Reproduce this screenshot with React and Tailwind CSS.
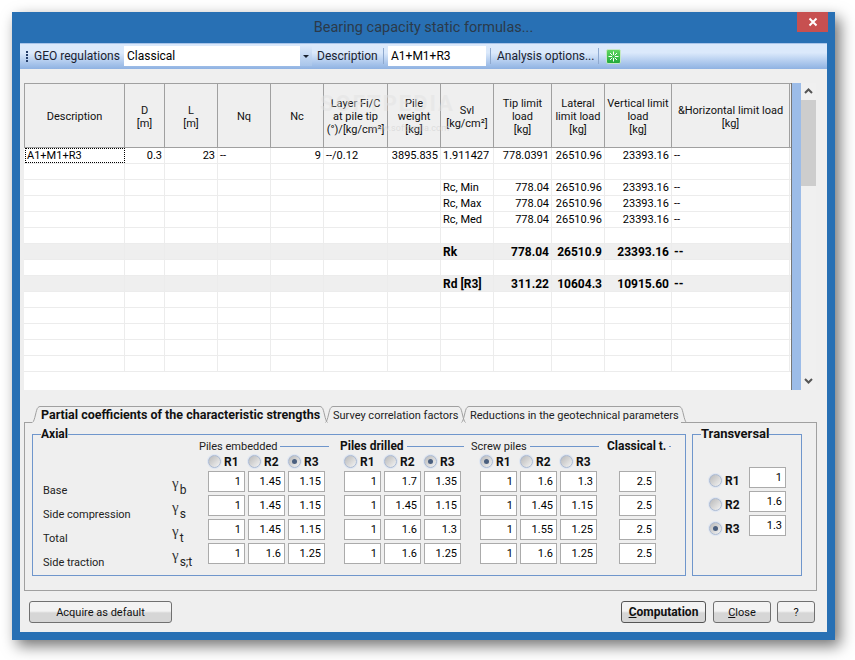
const FONT = "font-['Roboto','Liberation_Sans',sans-serif]";

const columns = [
  { w: 100, label: ["Description"] },
  { w: 40, label: ["D", "[m]"] },
  { w: 53, label: ["L", "[m]"] },
  { w: 53, label: ["Nq"] },
  { w: 53, label: ["Nc"] },
  { w: 64, label: ["Layer Fi/C", "at pile tip", "(°)/[kg/cm²]"] },
  { w: 53, label: ["Pile", "weight", "[kg]"] },
  { w: 53, label: ["Svl", "[kg/cm²]"] },
  { w: 58, label: ["Tip limit", "load", "[kg]"] },
  { w: 53, label: ["Lateral", "limit load", "[kg]"] },
  { w: 67, label: ["Vertical limit", "load", "[kg]"] },
  { w: 118, label: ["&Horizontal limit load", "[kg]"] },
];

// text alignment per column in the body rows
const aligns = ["l", "r", "r", "l", "r", "l", "r", "l", "r", "r", "r", "l"];

const E = "";
const rows = [
  { cells: ["A1+M1+R3", "0.3", "23", "--", "9", "--/0.12", "3895.835", "1.911427", "778.0391", "26510.96", "23393.16", "--"], first: true },
  { cells: [] },
  { cells: [E, E, E, E, E, E, E, "Rc, Min", "778.04", "26510.96", "23393.16", "--"] },
  { cells: [E, E, E, E, E, E, E, "Rc, Max", "778.04", "26510.96", "23393.16", "--"] },
  { cells: [E, E, E, E, E, E, E, "Rc, Med", "778.04", "26510.96", "23393.16", "--"] },
  { cells: [] },
  { cells: [E, E, E, E, E, E, E, "Rk", "778.04", "26510.9", "23393.16", "--"], bold: true },
  { cells: [] },
  { cells: [E, E, E, E, E, E, E, "Rd [R3]", "311.22", "10604.3", "10915.60", "--"], bold: true },
  { cells: [] },
  { cells: [] },
  { cells: [] },
  { cells: [] },
  { cells: [] },
];

const groups = [
  {
    w: 136,
    title: "Piles embedded",
    titleClass: "-ml-[9px] w-[130px]",
    bold: false,
    radio: 2,
    values: [["1", "1.45", "1.15"], ["1", "1.45", "1.15"], ["1", "1.45", "1.15"], ["1", "1.6", "1.25"]],
  },
  {
    w: 136,
    title: "Piles drilled",
    titleClass: "-ml-[4px] w-[124px]",
    bold: true,
    radio: 2,
    values: [["1", "1.7", "1.35"], ["1", "1.45", "1.15"], ["1", "1.6", "1.3"], ["1", "1.6", "1.25"]],
  },
  {
    w: 139,
    title: "Screw piles",
    titleClass: "-ml-[9px] w-[128px]",
    bold: false,
    radio: 0,
    values: [["1", "1.6", "1.3"], ["1", "1.45", "1.15"], ["1", "1.55", "1.25"], ["1", "1.6", "1.25"]],
  },
];

const factors = [
  { label: "Base", sub: "b" },
  { label: "Side compression", sub: "s" },
  { label: "Total", sub: "t" },
  { label: "Side traction", sub: "s;t" },
];

const Radio = ({ checked }) => (
  <span className="flex h-[13px] w-[13px] shrink-0 items-center justify-center rounded-full border border-[#a9b9d3] bg-gradient-to-br from-[#b9b9b9] to-[#f4f4f4] shadow-[0_0_0_1px_#dfe6f1]">
    {checked && <span className="h-[5px] w-[5px] rounded-full bg-[#4a5f7f]" />}
  </span>
);

const NumBox = ({ value }) => (
  <div className="flex h-[21px] w-[37px] items-center justify-end border border-[#ababab] bg-white pr-[3px] text-[11px] leading-none text-black">
    {value}
  </div>
);

const Btn = ({ children, className = "", bold }) => (
  <button
    className={`h-[22px] rounded-[3px] border bg-gradient-to-b from-[#f3f3f3] from-45% to-[#d6d6d6] to-55% leading-none text-[#111] ${bold ? "border-[#555] text-[12px] font-bold" : "border-[#707070] text-[11px]"} ${className}`}
  >
    {children}
  </button>
);

const Sep = ({ className = "" }) => <span className={`h-[16px] w-px shrink-0 bg-[#8ea9cf] ${className}`} />;

const Toolbar = () => (
  <div className="flex h-[26px] items-center border-t border-[#a9c5ea] bg-gradient-to-b from-[#dbe9fb] from-35% to-[#8fb2e2] pb-[1px] pl-[6px] text-[12px] text-[#1a2230]">
    <span className="flex w-[8px] shrink-0 flex-col gap-[1px]">
      <i className="h-[2px] w-[2px] bg-[#27406b]" />
      <i className="h-[2px] w-[2px] bg-[#27406b]" />
      <i className="h-[2px] w-[2px] bg-[#27406b]" />
      <i className="h-[2px] w-[2px] bg-[#27406b]" />
    </span>
    <span className="w-[90px] shrink-0 whitespace-nowrap">GEO regulations</span>
    <div className="flex h-[20px] w-[188px] shrink-0 items-center justify-between bg-white pl-[3px]">
      <span className="text-black">Classical</span>
      <span className="flex h-full w-[12px] items-center justify-center bg-gradient-to-b from-[#dce9fa] to-[#a9c5ea]">
        <span className="border-x-[3px] border-t-[3px] border-x-transparent border-t-[#1a2230]" />
      </span>
    </div>
    <span className="ml-[5px] w-[66px] shrink-0 whitespace-nowrap">Description</span>
    <Sep />
    <div className="ml-[4px] flex h-[20px] w-[98px] shrink-0 items-center bg-white pl-[3px] text-black">A1+M1+R3</div>
    <Sep className="ml-[4px]" />
    <span className="ml-[6px] w-[101px] shrink-0 whitespace-nowrap">Analysis options...</span>
    <Sep />
    <svg width="15" height="15" viewBox="0 0 15 15" className="ml-[7px]">
      <defs>
        <linearGradient id="greenIcon" x1="0" y1="0" x2="0" y2="1">
          <stop offset="0" stopColor="#62d862" />
          <stop offset="1" stopColor="#1fa83a" />
        </linearGradient>
      </defs>
      <rect x="0.500" y="0.500" width="14" height="14" rx="1.500" fill="url(#greenIcon)" stroke="#c4e8c4" />
      <path d="M7.500 2.500v3.500M7.500 9v3.500M2.500 7.500h3.500M9 7.500h3.500M4 4l2.300 2.300M11 4L8.700 6.300M4 11l2.300-2.300M11 11L8.700 8.700" stroke="#fff" strokeWidth="1" />
    </svg>
  </div>
);

const Grid = () => (
  <div className="relative flex h-[307px] w-[792px] overflow-hidden">
    <div className="flex w-[767px] shrink-0 flex-col bg-white">
      <div className="flex h-[65px] shrink-0 border-y border-l border-[#a0a0a0] bg-[#efefef]">
        {columns.map((c, i) => (
          <div
            key={i}
            style={{ width: c.w }}
            className="flex shrink-0 flex-col items-center justify-center border-r border-[#a0a0a0] pt-[2px] text-center text-[11px] leading-[13px] whitespace-nowrap text-[#111]"
          >
            {c.label.map((l) => (
              <span key={l}>{l}</span>
            ))}
          </div>
        ))}
      </div>
      {rows.map((r, ri) => (
        <div key={ri} className={`flex h-[16px] shrink-0 border-b border-[#ececec] ${r.bold ? "bg-[#efefef] text-[12px] font-bold" : "bg-white text-[11px]"}`}>
          {columns.map((c, i) => (
            <div
              key={i}
              style={{ width: c.w }}
              className={`flex shrink-0 items-center overflow-hidden whitespace-nowrap px-[2px] leading-none text-black ${
                i === 0 ? "ml-px" : ""
              } ${aligns[i] === "r" ? "justify-end" : "justify-start"} ${
                r.first && i === 0 ? "outline-1 -outline-offset-1 outline-dotted outline-black" : "border-r border-[#ececec]"
              }`}
            >
              {r.cells[i]}
            </div>
          ))}
        </div>
      ))}
    </div>
    <div className="w-px shrink-0 bg-[#777]" />
    <div className="w-[9px] shrink-0 bg-[#9cbce8]" />
    <div className="flex w-[15px] shrink-0 flex-col items-center bg-[#f0f0f0]">
      <svg width="15" height="17" viewBox="0 0 15 17" className="shrink-0">
        <path d="M4 10l3.500-3.500L11 10" fill="none" stroke="#555" strokeWidth="2" />
      </svg>
      <div className="h-[86px] w-full bg-[#cdcdcd]" />
      <div className="flex-1" />
      <svg width="15" height="17" viewBox="0 0 15 17" className="shrink-0">
        <path d="M4 6l3.500 3.500L11 6" fill="none" stroke="#555" strokeWidth="2" />
      </svg>
    </div>
    {/* faint site watermark over the header */}
    <div className="pointer-events-none absolute top-[10px] left-[296px] text-[22px] leading-none font-bold tracking-[2px] text-[#e2e2e2]/50">
      SOFTPEDIA
    </div>
    <div className="pointer-events-none absolute top-[41px] left-[345px] text-[9px] leading-none text-[#cfcfcf]/60">
      www.softpedia.com
    </div>
  </div>
);

// the slanted edge of a tab, drawn from the bottom line up to the top line
const TabEdge = ({ flip }) => (
  <svg width="8" height="17" viewBox="0 0 8 17" className={`shrink-0 ${flip ? "-scale-x-100" : ""}`}>
    <path d="M0.500 16.500C3 15 4 3 6 1.500Q7 0.500 8 0.500" fill="none" stroke="#a0a0a0" />
  </svg>
);

const Tab = ({ children, className, active }) => (
  <div className={`flex h-[17px] items-stretch ${active ? "z-10" : ""} ${className}`}>
    <TabEdge />
    <div className={`flex flex-1 items-center border-t border-[#a0a0a0] whitespace-nowrap ${active ? "font-bold text-[#111]" : "text-[#222]"}`}>
      {children}
    </div>
    <TabEdge flip />
  </div>
);

const Tabs = () => (
  <div className="flex h-[17px] leading-none">
    <div className="w-[8px] shrink-0 border-b border-[#a0a0a0]" />
    <Tab active className="w-[296px] text-[12.500px]">
      <span className="pl-[1px]">Partial coefficients of the characteristic strengths</span>
    </Tab>
    <Tab className="-ml-[3px] w-[141px] text-[11px]">
      <span>Survey correlation factors</span>
    </Tab>
    <Tab className="-ml-[5px] w-[220px] text-[11px]">
      <span className="pl-[1px]">Reductions in the geotechnical parameters</span>
    </Tab>
    <div className="flex-1 border-b border-[#a0a0a0]" />
  </div>
);

const GroupColumn = ({ g }) => (
  <div style={{ width: g.w }} className="shrink-0">
    <div className={`flex h-[16px] items-center leading-none ${g.titleClass}`}>
      <span className={`whitespace-nowrap ${g.bold ? "text-[12px] font-bold text-[#111]" : "text-[11px] text-[#222]"}`}>{g.title}</span>
      <span className="ml-[3px] h-px flex-1 bg-[#6f96cc]" />
    </div>
    <div className="flex h-[15px] gap-[7px]">
      {["R1", "R2", "R3"].map((r, i) => (
        <span key={r} className="flex w-[33px] items-center gap-[3px] text-[12px] font-bold text-[#111]">
          <Radio checked={g.radio === i} />
          {r}
        </span>
      ))}
    </div>
    <div className="mt-[2px] flex flex-col gap-[3px]">
      {g.values.map((row, ri) => (
        <div key={ri} className="flex gap-[3px]">
          {row.map((v, i) => (
            <NumBox key={i} value={v} />
          ))}
        </div>
      ))}
    </div>
  </div>
);

const Axial = () => (
  <fieldset className="h-[149px] w-[654px] shrink-0 border border-[#6f96cc]">
    <legend className="ml-[8px] text-[12px] leading-[14px] font-bold text-[#111]">Axial</legend>
    <div className="-mt-[3px] flex pl-[10px]">
      <div className="w-[165px] shrink-0 pt-[35px]">
        {factors.map((f) => (
          <div key={f.label} className="flex h-[24px] items-end pb-[1px] text-[11px] leading-none text-[#222]">
            <span className="w-[129px]">{f.label}</span>
            <span className="-translate-y-[5px] font-['Liberation_Serif',serif] text-[15px] text-[#333]">γ</span>
            <span className="ml-[1px] text-[12px] text-[#222]">{f.sub}</span>
          </div>
        ))}
      </div>
      {groups.map((g) => (
        <GroupColumn key={g.title} g={g} />
      ))}
      <div className="-ml-[12px] w-[64px] shrink-0">
        <div className="flex h-[16px] items-center text-[12px] leading-none">
          <span className="font-bold whitespace-nowrap text-[#111]">Classical t.</span>
          <span className="ml-[3px] h-px flex-1 bg-[#6f96cc]" />
        </div>
        <div className="mt-[17px] flex flex-col items-start gap-[3px] pl-[12px]">
          {["2.5", "2.5", "2.5", "2.5"].map((v, i) => (
            <NumBox key={i} value={v} />
          ))}
        </div>
      </div>
    </div>
  </fieldset>
);

const Transversal = () => (
  <fieldset className="h-[149px] w-[110px] shrink-0 border border-[#6f96cc]">
    <legend className="ml-[8px] text-[13px] leading-[14px] font-bold text-[#111]">Transversal</legend>
    <div className="mt-[26px] flex flex-col gap-[3px] pl-[16px]">
      {[["R1", "1"], ["R2", "1.6"], ["R3", "1.3"]].map(([r, v], i) => (
        <div key={r} className="flex items-center">
          <span className="flex w-[40px] translate-y-[3px] items-center gap-[3px] text-[12px] font-bold text-[#111]">
            <Radio checked={i === 2} />
            {r}
          </span>
          <NumBox value={v} />
        </div>
      ))}
    </div>
  </fieldset>
);

export default function App() {
  return (
    <div className={`h-[660px] w-[855px] overflow-hidden bg-white pt-[12px] pl-[12px] ${FONT}`}>
      <div className="flex h-[628px] w-[823px] flex-col bg-[#2870b4] px-[8px] pb-[8px] shadow-[5px_6px_14px_rgba(0,0,0,0.55)]">
        <div className="relative flex h-[31px] shrink-0 items-center justify-center text-[14.500px] text-[#2b3a4a]">
          Bearing capacity static formulas...
          <div className="absolute top-0 right-[-1px] flex h-[20px] w-[31px] items-center justify-center bg-[#c75050]">
            <svg width="10" height="10" viewBox="0 0 10 10">
              <path d="M1.500 1.500l7 7M8.500 1.500l-7 7" stroke="#fff" strokeWidth="2" />
            </svg>
          </div>
        </div>
        <div className="flex min-h-0 flex-1 flex-col bg-[#efefef]">
          <Toolbar />
          <div className="mt-[14px] ml-[4px]">
            <Grid />
          </div>
          <div className="mt-[16px] ml-[4px] w-[793px]">
            <Tabs />
            <div className="flex h-[168px] gap-[6px] border-x border-b border-[#a0a0a0] bg-[#efefef] pt-[4px] pl-[7px]">
              <Axial />
              <Transversal />
            </div>
          </div>
          <div className="mt-[10px] flex items-start pr-[12px] pl-[9px]">
            <Btn className="w-[143px]">Acquire as default</Btn>
            <div className="flex-1" />
            <Btn bold className="w-[85px]">
              <u>C</u>omputation
            </Btn>
            <Btn className="ml-[7px] w-[58px]">
              <u>C</u>lose
            </Btn>
            <Btn className="ml-[6px] w-[38px]">?</Btn>
          </div>
        </div>
      </div>
    </div>
  );
}
